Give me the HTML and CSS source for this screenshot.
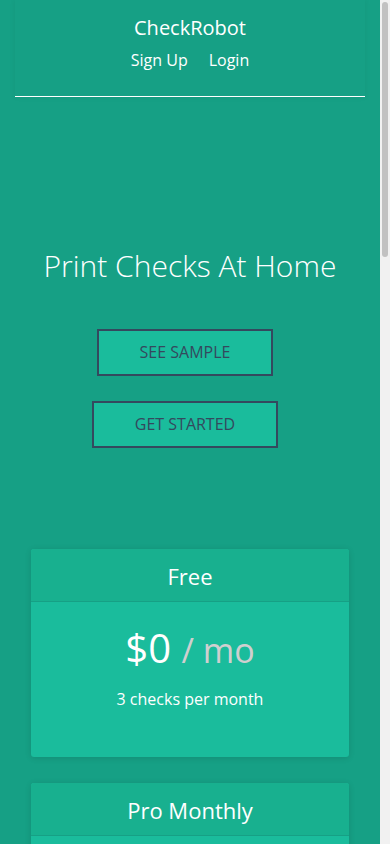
FILE: index.html
```html
<!DOCTYPE html>
<html lang="en">
  <head>
    <meta charset="UTF-8" />
    <meta name="viewport" content="width=device-width" />
    <title>CheckRobot</title>
    <link rel="stylesheet" href="styles.css">
  </head>
  <body>
    <header class="site-header">
      <div class="brand">CheckRobot</div>
      <nav class="nav">
        <a href="#">Sign Up</a>
        <a href="#">Login</a>
      </nav>
    </header>

    <section class="hero">
      <h1>Print Checks At Home</h1>
      <a class="btn" href="#">See Sample</a>
      <a class="btn" href="#">Get Started</a>
    </section>

    <section class="pricing">
      <div class="plan">
        <div class="plan-title">Free</div>
        <div class="plan-body">
          <div class="price">$0 <span class="per">/ mo</span></div>
          <p>3 checks per month</p>
        </div>
      </div>
      <div class="plan">
        <div class="plan-title">Pro Monthly</div>
        <div class="plan-body">
          <div class="price">$5 <span class="per">/ mo</span></div>
          <p>Unlimited checks</p>
        </div>
      </div>
      <div class="plan">
        <div class="plan-title">Pro Yearly</div>
        <div class="plan-body">
          <div class="price">$50 <span class="per">/ yr</span></div>
          <p>Unlimited checks</p>
        </div>
      </div>
    </section>

    <section class="features">
      <h2>Why CheckRobot?</h2>
      <p>Print checks on blank check stock with any laser or inkjet printer.</p>
      <p>Save money compared to ordering pre-printed checks from your bank.</p>
      <p>Keep track of every check you write in one place.</p>
    </section>

    <footer class="footer">&copy; CheckRobot</footer>

    <!-- window scrollbar, as it shows in the screenshot -->
    <div class="scrollbar"><div class="thumb"></div></div>
  </body>
</html>
```

FILE: styles.css
```css
html {
  background: #16a085;
}
body {
  margin: 0 10px 0 0;
  color: #fff;
  font-family: "Open Sans", "Liberation Sans", sans-serif;
  background: #16a085;
}
a {
  color: #fff;
  text-decoration: none;
}
.scrollbar {
  position: fixed;
  top: 0;
  right: 0;
  bottom: 0;
  width: 10px;
  background: #f1f1f1;
}
.thumb {
  margin: 2px 2px 0;
  height: 255px;
  border-radius: 3px;
  background: #c1c1c1;
}
.site-header {
  margin: 0 15px;
  height: 96px;
  border-bottom: 1px solid #fff;
  box-shadow: 0 0 6px rgba(0, 0, 0, 0.06);
  text-align: center;
}
.brand {
  padding-top: 14px;
  font-size: 20px;
  line-height: 28px;
}
.nav {
  display: flex;
  justify-content: center;
  gap: 21px;
  margin-top: 6px;
  font-size: 16px;
  line-height: 24px;
}
.hero {
  display: flex;
  flex-direction: column;
  align-items: center;
  padding: 149px 0 76px;
}
.hero h1 {
  margin: 0 0 43px;
  font-size: 30px;
  font-weight: 300;
  line-height: 40px;
}
.btn {
  display: block;
  box-sizing: border-box;
  height: 47px;
  line-height: 43px;
  padding: 0 41px;
  margin: 0 10px 25px 0;
  border: 2px solid #34495e;
  background: #1abc9c;
  color: #34495e;
  font-size: 16px;
  text-transform: uppercase;
}
.pricing {
  padding: 0 31px;
}
.plan {
  margin-bottom: 26px;
  border-radius: 3px;
  overflow: hidden;
  background: #1abc9c;
  box-shadow: 0 1px 6px rgba(0, 0, 0, 0.12);
  text-align: center;
}
.plan-title {
  height: 52px;
  line-height: 54px;
  font-size: 22px;
  background: #18b08f;
  border-bottom: 1px solid #16a085;
}
.plan-body {
  padding: 18px 0 47px;
}
.price {
  font-size: 40px;
  line-height: 56px;
}
.per {
  color: #cfcfcf;
  font-size: 34px;
}
.plan-body p {
  margin: 10px 0 0;
  font-size: 16px;
  line-height: 22px;
}
.features {
  padding: 60px 31px 80px;
  text-align: center;
}
.features h2 {
  font-weight: 300;
  font-size: 28px;
  margin: 0 0 30px;
}
.features p {
  font-size: 16px;
  line-height: 26px;
  margin: 0 0 40px;
}
.footer {
  padding: 40px 0 60px;
  text-align: center;
  font-size: 14px;
}
```
